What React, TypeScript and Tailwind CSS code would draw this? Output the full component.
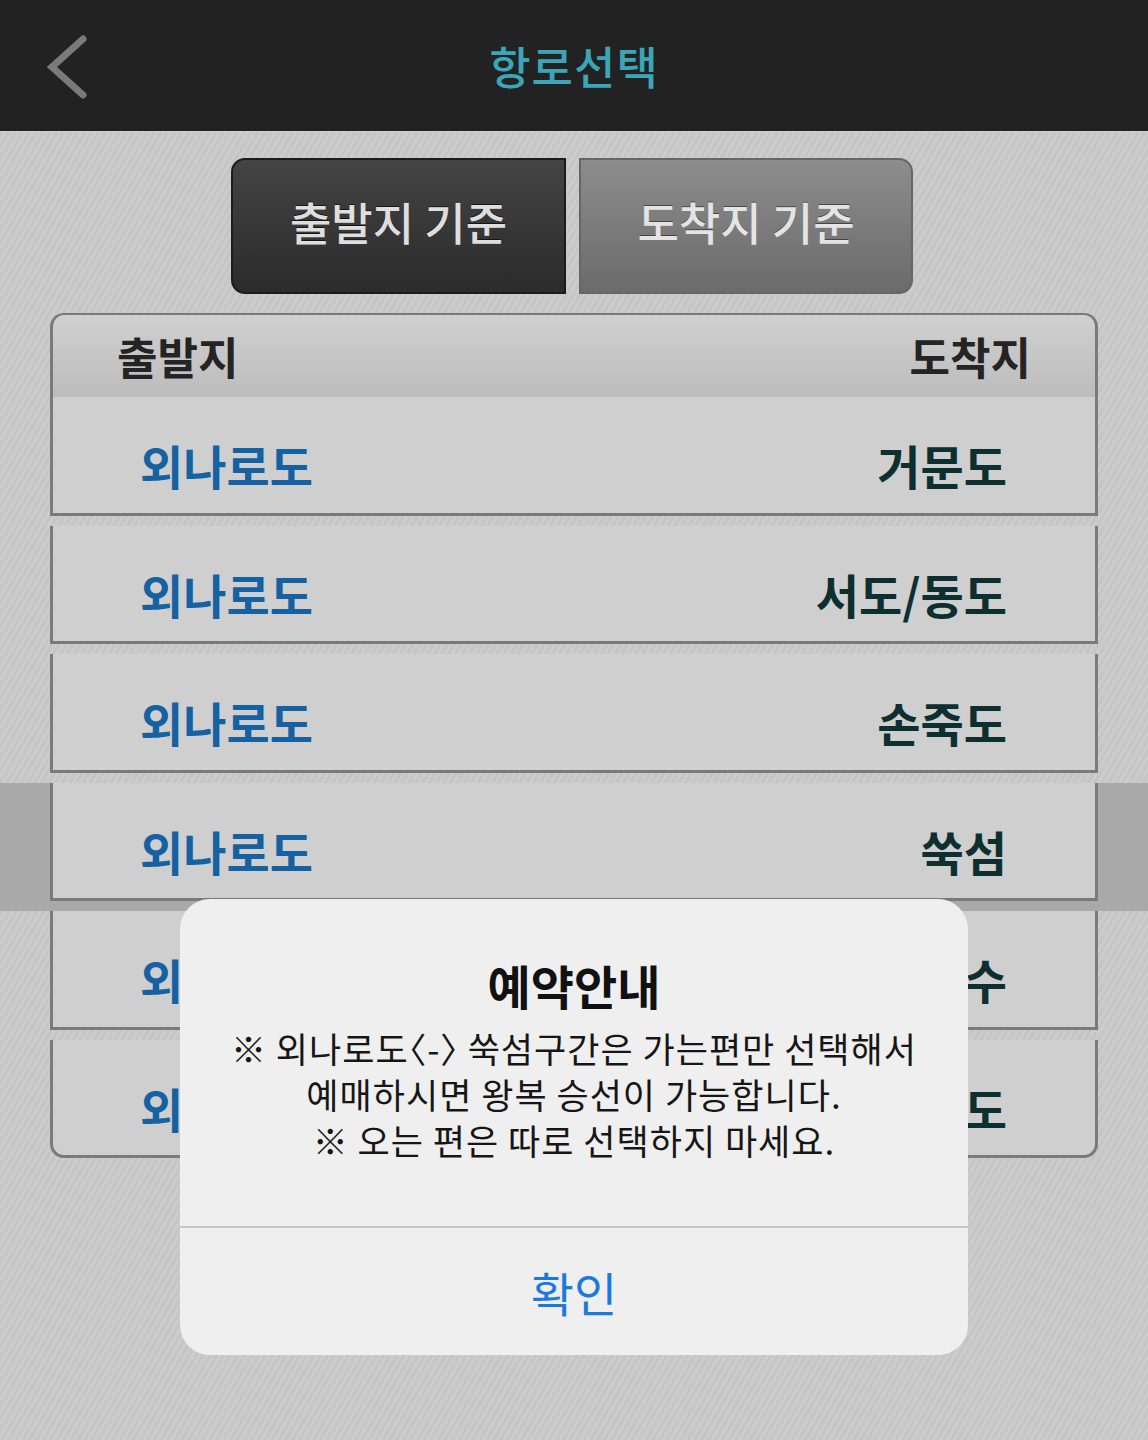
import React from "react";

const rows: { from: string; to: string; highlight?: boolean }[] = [
  { from: "외나로도", to: "서도/동도" },
  { from: "외나로도", to: "손죽도" },
  { from: "외나로도", to: "쑥섬", highlight: true },
  { from: "외나로도", to: "여수" },
  { from: "외나로도", to: "초도" },
];

function Row({ from, to, last }: { from: string; to: string; last?: boolean }) {
  return (
    <div
      className={
        "flex h-[118.5px] items-center justify-between border-x-[3px] border-b-[3px] border-[#7a7a7a] bg-[#cfcfcf] pl-[87px] pr-[88px] pt-[20px] " +
        (last ? "rounded-b-[14px]" : "")
      }
    >
      <span className="text-[47px] font-bold leading-none text-[#1561a1]">{from}</span>
      <span className="text-[47px] font-bold leading-none text-[#0e2f2f]">{to}</span>
    </div>
  );
}

export default function App() {
  return (
    <div className="relative h-[1440px] w-full overflow-hidden bg-[#c8c8c8] bg-[image:repeating-linear-gradient(120deg,#c5c5c5_0px,#c5c5c5_3px,#cccccc_3px,#cccccc_6px)] font-['Noto_Sans_CJK_KR','Noto_Sans',sans-serif]">
      {/* Header */}
      <div className="relative flex h-[132px] items-center justify-center border-b border-[#cfcfcf] bg-[#222222]">
        <svg
          className="absolute left-[45px] top-[34px]"
          width="46"
          height="66"
          viewBox="0 0 46 66"
          fill="none"
        >
          <path d="M38 5 L7 33 L38 61" stroke="#7a7a7a" strokeWidth="7" strokeLinecap="round" strokeLinejoin="miter" />
        </svg>
        <span className="text-[45px] font-medium leading-none tracking-[1px] text-[#3ba6b8]">항로선택</span>
      </div>

      {/* Tabs */}
      <div className="mt-[26px] flex justify-center gap-[13px] pr-[4px]">
        <div className="flex h-[136px] w-[335px] items-center justify-center rounded-l-[14px] border-2 border-[#1c1c1c] bg-linear-to-b from-[#444444] to-[#2b2b2b] pb-[10px]">
          <span className="text-[45px] font-medium leading-none text-[#dedede] [text-shadow:0_-1px_0_rgba(0,0,0,0.6)]">
            출발지 기준
          </span>
        </div>
        <div className="flex h-[136px] w-[334px] items-center justify-center rounded-r-[14px] border-2 border-[#666666] bg-linear-to-b from-[#8d8d8d] to-[#6b6b6b] pb-[10px]">
          <span className="text-[45px] font-medium leading-none text-[#e4e4e4] [text-shadow:0_-1px_0_rgba(0,0,0,0.45)]">
            도착지 기준
          </span>
        </div>
      </div>

      {/* Table */}
      <div className="mt-[19px] flex flex-col">
        <div className="px-[50px] pb-[10px]">
          <div className="flex h-[84px] items-center justify-between rounded-t-[14px] border-x-[3px] border-t-2 border-[#7a7a7a] bg-linear-to-b from-[#d0d0d0] to-[#bcbcbc] pl-[64px] pr-[64px]">
            <span className="text-[44px] font-bold leading-none text-[#242424]">출발지</span>
            <span className="text-[44px] font-bold leading-none text-[#242424]">도착지</span>
          </div>
          <Row from="외나로도" to="거문도" />
        </div>
        {rows.map((r, i) => (
          <div
            key={i}
            className={"px-[50px] pb-[10px] " + (r.highlight ? "bg-[#a9a9a9]" : "")}
          >
            <Row from={r.from} to={r.to} last={i === rows.length - 1} />
          </div>
        ))}
      </div>

      {/* Dialog */}
      <div className="absolute left-[180px] top-[899px] flex h-[456px] w-[788px] flex-col overflow-hidden rounded-[30px] bg-[#efefef]">
        <div className="flex h-[327px] flex-col items-center pt-[58px]">
          <div className="text-[47px] font-bold leading-[56px] text-[#111111]">예약안내</div>
          <div className="mt-[12px] whitespace-nowrap text-center text-[35px] leading-[46px] tracking-[1px] text-[#161616]">
            ※ 외나로도<span className="[font-feature-settings:'halt']">〈-〉</span> 쑥섬구간은 가는편만 선택해서
            <br />
            예매하시면 왕복 승선이 가능합니다.
            <br />
            ※ 오는 편은 따로 선택하지 마세요.
          </div>
        </div>
        <div className="flex flex-1 items-center justify-center border-t-2 border-[#c6c6c6]">
          <span className="text-[47px] leading-none text-[#1b7ae0]">확인</span>
        </div>
      </div>
    </div>
  );
}
